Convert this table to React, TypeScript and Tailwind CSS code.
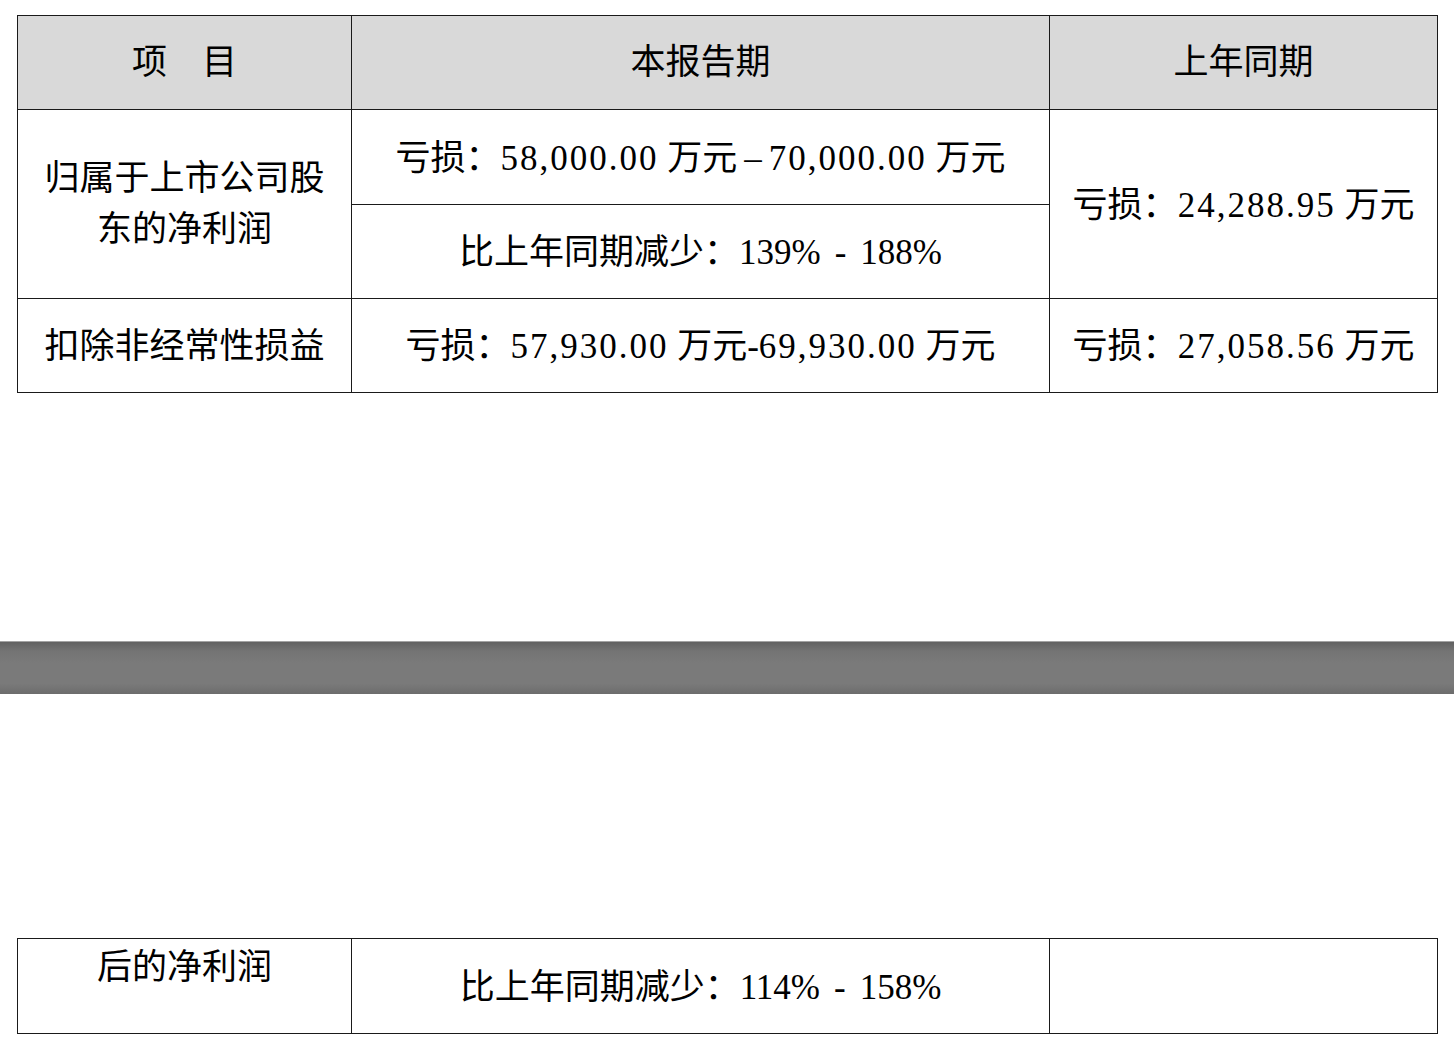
const font = "font-['Liberation_Serif','Noto_Sans_CJK_SC',serif]"

const cell = "border-[1.5px] border-[#1a1a1a] text-center align-middle text-[35px] leading-[51px] text-black"

// numbers in the source are half-width monospaced, so open them up a little
function N({ children }: { children: string }) {
  return <span className="tracking-[2px]">{children}</span>
}

export default function App() {
  return (
    <div className={`w-[1454px] h-[1050px] bg-white ${font}`}>
      <div className="pt-[15px] pl-[17px]">
        <table className="border-collapse table-fixed w-[1420px]">
          <colgroup>
            <col className="w-[334px]" />
            <col className="w-[698px]" />
            <col className="w-[388px]" />
          </colgroup>
          <tbody>
            <tr className="h-[94px] bg-[#d9d9d9]">
              <td className={cell}>项　目</td>
              <td className={cell}>本报告期</td>
              <td className={cell}>上年同期</td>
            </tr>
            <tr className="h-[95px]">
              <td className={cell} rowSpan={2}>
                归属于上市公司股
                <br />
                东的净利润
              </td>
              <td className={`${cell} pt-[2px]`}>
                亏损：<N>58,000.00</N> 万元{"\u2009–\u2009"}<N>70,000.00</N> 万元
              </td>
              <td className={`${cell} pt-[2px]`} rowSpan={2}>
                亏损：<N>24,288.95</N> 万元
              </td>
            </tr>
            <tr className="h-[94px]">
              <td className={`${cell} pt-[2px]`}>
                比上年同期减少：139%{"\u2009\u2009-\u2009\u2009"}188%
              </td>
            </tr>
            <tr className="h-[94px]">
              <td className={`${cell} pt-[2px]`}>扣除非经常性损益</td>
              <td className={`${cell} pt-[2px]`}>
                亏损：<N>57,930.00</N> 万元-<N>69,930.00</N> 万元
              </td>
              <td className={`${cell} pt-[2px]`}>
                亏损：<N>27,058.56</N> 万元
              </td>
            </tr>
          </tbody>
        </table>
      </div>

      <div className="mt-[248px] h-[53px] border-t border-[#a3a3a3] bg-[linear-gradient(to_bottom,#616161_0%,#747474_18%,#7a7a7a_40%,#7a7a7a_80%,#6c6c6c_100%)]" />

      <div className="mt-[244px] pl-[17px]">
        <table className="border-collapse table-fixed w-[1420px]">
          <colgroup>
            <col className="w-[334px]" />
            <col className="w-[698px]" />
            <col className="w-[388px]" />
          </colgroup>
          <tbody>
            <tr className="h-[95px]">
              <td className={`${cell} !align-top pt-[3px]`}>后的净利润</td>
              <td className={`${cell} pt-[2px]`}>
                比上年同期减少：114%{"\u2009\u2009-\u2009\u2009"}158%
              </td>
              <td className={cell}></td>
            </tr>
          </tbody>
        </table>
      </div>
    </div>
  )
}
